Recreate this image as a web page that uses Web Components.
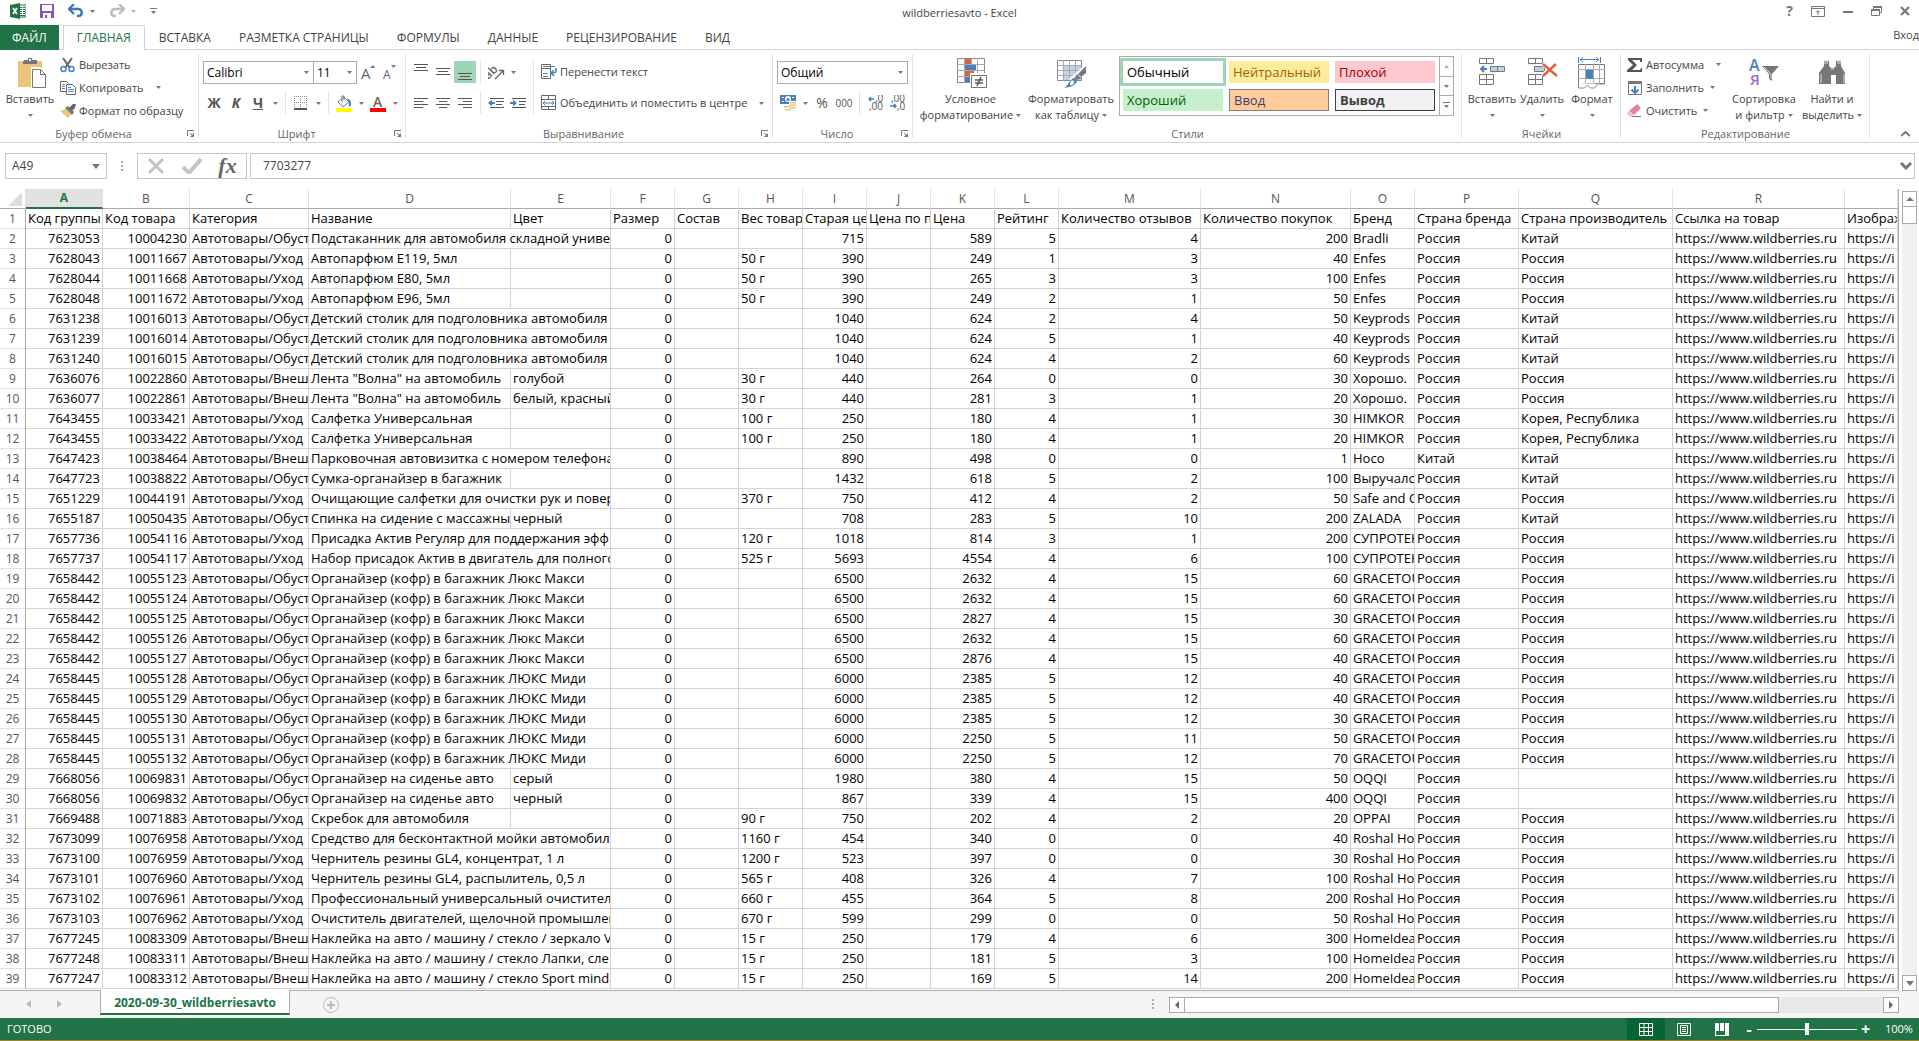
<!DOCTYPE html>
<html lang="ru">
<head>
<meta charset="utf-8">
<title>wildberriesavto - Excel</title>
<style>
html, body { margin: 0; height: 100%; overflow: hidden; background: #fff; }
body {
  --green: #217346; --line: #d4d4d4; --edge: #ababab; --ink: #444; --soft: #666;
  font-family: "Open Sans", "Noto Sans", sans-serif; font-size: 12px; line-height: 16px; color: var(--ink);
}
</style>
</head>
<body>
<xl-app></xl-app>
<script>
const ICONS = {
  down: [5, 3, '<path d="M0 0h5L2.5 3z" fill="#777"/>'],
  downpale: [5, 3, '<path d="M0 0h5L2.5 3z" fill="#b5b5b5"/>'],
  downbig: [8, 5, '<path d="M0 0h8L4 5z" fill="#777"/>'],
  up: [8, 4, '<path d="M0 4h8L4 0z" fill="#777"/>'],
  uppale: [5, 3, '<path d="M0 3h5L2.5 0z" fill="#ababab"/>'],
  left: [4, 8, '<path d="M4 0v8L0 4z" fill="#666"/>'],
  right: [4, 8, '<path d="M0 0v8l4-4z" fill="#666"/>'],
  leftpale: [5, 8, '<path d="M5 0v8L0 4z" fill="#bbb"/>'],
  rightpale: [5, 8, '<path d="M0 0v8l5-4z" fill="#bbb"/>'],
  more: [7, 7, '<path d="M0 0h7v1H0z M1 3h5L3.500 6z" fill="#777"/>'],
  excel: [16, 16, '<path d="M9 2h7v12H9z" fill="#fff" stroke="#217346"/><path d="M10 4h2v1h-2zM13 4h2v1h-2zM10 6h2v1h-2zM13 6h2v1h-2zM10 8h2v1h-2zM13 8h2v1h-2zM10 10h2v1h-2zM13 10h2v1h-2zM10 12h5v1h-5z" fill="#217346"/><path d="M0 2l10-2v16L0 14z" fill="#217346"/><path d="M3 5l4 6M7 5l-4 6" stroke="#fff" stroke-width="1.800"/>'],
  save: [14, 14, '<path d="M0 0h14v14H0z" fill="#8a56ae"/><path d="M2 1h10v6H2zM3 9h8v5H3z" fill="#fff"/><path d="M5 11h2v3H5z" fill="#8a56ae"/>'],
  undo: [16, 14, '<path d="M2 5h8c5 0 5 7 0 7H9" fill="none" stroke="#3f78b5" stroke-width="2.400"/><path d="M6 0L1 5l5 5" fill="none" stroke="#3f78b5" stroke-width="2.400"/>'],
  redo: [16, 14, '<path d="M14 5H6c-5 0-5 7 0 7h1" fill="none" stroke="#bdbdbd" stroke-width="2.400"/><path d="M10 0l5 5-5 5" fill="none" stroke="#bdbdbd" stroke-width="2.400"/>'],
  ribbonopt: [14, 11, '<path d="M.5.5h13v10H.5zM0 2.500h14" fill="none" stroke="#777"/><path d="M7 9V5M5 6.500L7 4.500l2 2" fill="none" stroke="#777"/>'],
  min: [10, 10, '<path d="M0 5h10v2H0z" fill="#777"/>'],
  restore: [11, 10, '<path d="M2.500 3V.500h8v6H8M.5 3.500h8v6h-8z" fill="none" stroke="#777"/><path d="M2 0h9v2H2zM0 3h9v2H0z" fill="#777"/>'],
  close: [10, 10, '<path d="M1 1l8 8M9 1L1 9" stroke="#777" stroke-width="2.200"/>'],
  paste: [32, 32, '<path d="M4 4h24v26H4z" fill="#ecc57c"/><path d="M10 4V3h4V1h4v2h5v4H9V4z" fill="#777"/><path d="M15 2h2v2h-2z" fill="#fff"/><path d="M17 10h9l7 6v16H17z" fill="#fff"/><path d="M18.500 12.500h8l5 5v13h-13zM26.500 12.500v5h5" fill="#fff" stroke="#777"/>'],
  cut: [16, 16, '<path d="M3 1l7 10M12 1L5 11" stroke="#666" stroke-width="2"/><circle cx="3.500" cy="12" r="2.500" fill="none" stroke="#4a80bb" stroke-width="1.500"/><circle cx="11.500" cy="12" r="2.500" fill="none" stroke="#4a80bb" stroke-width="1.500"/>'],
  copy: [16, 16, '<path d="M.5 1.500h6l2 2v8h-8z" fill="#fff" stroke="#666"/><path d="M2 4.500h3M2 6.500h3M2 8.500h3" stroke="#4a80bb"/><path d="M6.500 4.500h6l3 3v7h-9z" fill="#fff" stroke="#666"/><path d="M8 7.500h3M8 9.500h6M8 11.500h6" stroke="#4a80bb"/>'],
  brush: [16, 16, '<path d="M0 8l6-2 5 5-3 4z" fill="#ecc57c"/><path d="M5 5l3-2 6 6-2 3z" fill="#777"/><path d="M9 5l4-4 3 0-1 4-3 3z" fill="#666"/>'],
  grow: [14, 16, '<path d="M9 4l3-3 2 3z" fill="#4a80bb"/><text x="0" y="15" font-size="15" fill="#666" font-family="Open Sans">A</text>'],
  shrink: [14, 16, '<path d="M8 1h5l-2.500 3z" fill="#4a80bb"/><text x="0" y="15" font-size="12" fill="#666" font-family="Open Sans">A</text>'],
  borders: [14, 14, '<path d="M.5 0v12M6.500 0v12M12.500 0v12M0 .5h13M0 6.500h13" stroke="#888" stroke-dasharray="1 1"/><path d="M0 12h13v2H0z" fill="#555"/>'],
  fill: [16, 17, '<path d="M2 7l6-5 5 5-6 5z" fill="#fff" stroke="#777"/><path d="M6 7V1h2v4" fill="none" stroke="#777"/><path d="M11 4c4 0 4 3 4 6 0 2-3 2-2-1z" fill="#4a80bb"/><path d="M0 13h16v4H0z" fill="#ff0"/>'],
  fontcolor: [16, 17, '<text x="3" y="12" font-size="14" font-weight="600" fill="#666" font-family="Open Sans">A</text><path d="M0 13h16v4H0z" fill="#f00"/>'],
  top: [14, 22, '<path d="M0 3.500h14M2 6.500h10M0 9.500h14" stroke="#555"/>'],
  mid: [14, 22, '<path d="M0 7.500h14M2 10.500h10M0 13.500h14" stroke="#555"/>'],
  bot: [14, 22, '<path d="M0 12.500h14M2 15.500h10M0 18.500h14" stroke="#555"/>'],
  al: [14, 11, '<path d="M0 .5h14M0 3.500h9M0 6.500h14M0 9.500h9" stroke="#555"/>'],
  ac: [14, 11, '<path d="M0 .5h14M3 3.500h8M0 6.500h14M3 9.500h8" stroke="#555"/>'],
  ar: [14, 11, '<path d="M0 .5h14M5 3.500h9M0 6.500h14M5 9.500h9" stroke="#555"/>'],
  orient: [17, 16, '<text x="-3" y="10" transform="rotate(-45 6 9)" font-size="12" font-weight="600" fill="#666" font-family="Open Sans">ab</text><path d="M7 15L15 7M11 6.500h4.500V11" fill="none" stroke="#666" stroke-width="1.300"/>'],
  outdent: [16, 11, '<path d="M2 .5h14M8 3.500h8M8 6.500h6M2 9.500h14" stroke="#555"/><path d="M0 5l4-3.500v2.500h3v2H4v2.500z" fill="#4a80bb"/>'],
  indent: [16, 11, '<path d="M2 .5h14M9 3.500h7M9 6.500h6M2 9.500h14" stroke="#555"/><path d="M7 5L3 1.500v2.500H0v2h3v2.500z" fill="#4a80bb"/>'],
  wrap: [16, 16, '<path d="M.5.5h9v4h-9zM.5 4.500h9v10h-9z" fill="#fff" stroke="#666"/><path d="M2 2.500h12M2 9.500h5M2 12.500h5" stroke="#4a80bb"/><path d="M15 4v3c0 2-2 2-4 2M13 6l-3 3 3 3" fill="none" stroke="#4a80bb" stroke-width="1.500"/>'],
  merge: [16, 16, '<path d="M.5.5h14v14H.5zM.5 4.500h14M.5 11.500h14M7.500.500v4M7.500 11.500v3" fill="none" stroke="#666"/><path d="M2 8h11M4 6L2 8l2 2M11 6l2 2-2 2" fill="none" stroke="#4a80bb"/>'],
  money: [16, 16, '<path d="M0 0h16v9H0z" fill="#4a80bb"/><path d="M2 2h2v1H2zM12 2h2v1h-2zM2 6h2v1H2zM5 4a3 3 0 0 1 6 0a3 3 0 0 1-6 0" fill="#fff"/><circle cx="8" cy="4.500" r="1.500" fill="#4a80bb"/><path d="M9 6h7v8H9zM4 10h7v6H4z" fill="#fff"/><path d="M10 7h6v1.500h-6zM9 9.500h7V11H9zM10 12h6v1.500h-6zM4 11h6v1.500H4zM5 14h6v1.500H5z" fill="#ecc57c"/>'],
  incdec: [15, 16, '<path d="M6 4H1M3 2L1 4l2 2" fill="none" stroke="#4a80bb" stroke-width="1.500"/><text x="7" y="7" font-size="10" fill="#555" font-family="Open Sans">,0</text><text x="1" y="15" font-size="10" fill="#555" font-family="Open Sans">,00</text>'],
  decdec: [15, 16, '<text x="1" y="7" font-size="10" fill="#555" font-family="Open Sans">,00</text><path d="M0 11h6M4 9l2 2-2 2" fill="none" stroke="#4a80bb" stroke-width="1.500"/><text x="7" y="15" font-size="10" fill="#555" font-family="Open Sans">,0</text>'],
  cond: [32, 32, '<path d="M2.500 1.500h27v24h-27z" fill="#fff" stroke="#888"/><path d="M2 7.500h28M2 13.500h28M2 19.500h28M9.500 1v25M22.500 1v25M16.500 1v25" stroke="#aaa"/><path d="M10 2h6v5h-6zM10 14h9v5h-9z" fill="#dc6141"/><path d="M10 8h11v5H10zM10 20h5v5h-5z" fill="#4a80bb"/><path d="M15 16h17v16H15z" fill="#fff"/><path d="M16.500 18.500h15v12h-15z" fill="#fff" stroke="#777"/><path d="M20 23h8M20 26h8M26 20l-4 9" stroke="#555" stroke-width="1.500"/>'],
  tablefmt: [32, 32, '<path d="M2.500 3.500h24v20h-24z" fill="#fff" stroke="#888"/><path d="M8 9h18v14H8z" fill="#c0d3e8"/><path d="M2 8.500h25M2 13.500h25M2 18.500h25M8.500 3v21M14.500 3v21M20.500 3v21" stroke="#aaa"/><path d="M32 6v9L18 27l-4-5z" fill="#fff"/><path d="M31 9v7l-5 4-3-3z" fill="#777"/><path d="M22 17l4 4-3 2-3-3z" fill="#777"/><path d="M17 22c4-3 7 0 4 4-3 4-7 4-12 5 4-2 4-6 8-9z" fill="#4a80bb"/><path d="M15 26c1-3 4-3 4-1s-2 4-4 3z" fill="#fff"/>'],
  insert: [32, 32, '<path d="M3.500 1.500h14v5h-14zM10.500 1.500v5M3.500 17.500h14v10h-14zM10.500 17.500v10M3.500 22.500h14" fill="#fff" stroke="#777"/><path d="M14.500 9.500h14v5h-14zM21.500 9.500v5" fill="#bcd2ea" stroke="#777"/><path d="M5 12h6M8 9l-3 3 3 3" fill="none" stroke="#4a80bb" stroke-width="2"/>'],
  remove: [32, 32, '<path d="M2.500 1.500h14v5h-14zM9.500 1.500v5M2.500 17.500h14v10h-14zM9.500 17.500v10M2.500 22.500h14" fill="#fff" stroke="#777"/><path d="M8.500 9.500h10v5h-10z" fill="#bcd2ea" stroke="#777"/><path d="M17 6l14 13M30 6L17 19" stroke="#fff" stroke-width="5"/><path d="M17 7l14 12M30 7L17 19" stroke="#dc6141" stroke-width="2.400"/>'],
  format: [32, 32, '<path d="M2.500 0v6M24.500 0v6M4 2.500h19M7 0L4 2.500 7 5M20 0l3 2.500L20 5" fill="none" stroke="#4a80bb"/><path d="M2.500 7.500h26v19h-26z" fill="#fff" stroke="#777"/><path d="M2 12.500h27M2 21.500h27M9.500 7v20M17.500 7v20M23.500 7v20" stroke="#aaa"/><path d="M10 13h7v9h-7z" fill="#4a80bb"/><path d="M2.500 26v5h6l3-3 3 3h4l3-4h7" fill="#fff" stroke="#888"/>'],
  sum: [16, 16, '<path d="M1 1h14v4h-2V3H5l5 5-5 5h8l1-2h1v4H0v-2l6-5-5-5z" fill="#555"/>'],
  filldown: [16, 16, '<path d="M1.500 1.500h13v13h-13z" fill="#fff" stroke="#777"/><path d="M1 1h14v3H1z" fill="#777"/><path d="M8 6v7M4.500 9.500L8 13l3.500-3.500" fill="none" stroke="#4a80bb" stroke-width="2"/>'],
  erase: [16, 16, '<path d="M10 1l4 4-7 7-5-4z" fill="#e8819b"/><path d="M2 8l4 4-2 2-3-2-1-2z" fill="#ecc0cc"/><path d="M5 13.500h9" stroke="#777"/>'],
  sort: [32, 32, '<text x="1" y="14" font-size="16" font-weight="600" fill="#4a80bb" font-family="Open Sans">А</text><text x="2" y="28" font-size="15" font-weight="600" fill="#9a6bc0" font-family="Open Sans">Я</text><path d="M14 9h17l-7 8v7l-3-2v-5z" fill="#777"/><path d="M16 10l7 7v5" stroke="#ddd" fill="none"/>'],
  find: [32, 32, '<path d="M8 4h5v5l2 2h3l2-2V4h5v5l4 7v11h-9v-9h-5v9H3V16l5-7z" fill="#777"/><path d="M9 3v4M11 3v4M22 3v4M24 3v4M5 17v9M28 17v9M15 12h3" stroke="#ddd"/>'],
  launch: [8, 8, '<path d="M.5 6V.5H7M3 3l2 2" fill="none" stroke="#777"/><path d="M7 3v4H3z" fill="#777"/>'],
  collapse: [9, 6, '<path d="M0 5l4.500-4L9 5" fill="none" stroke="#777" stroke-width="2"/>'],
  expand: [12, 8, '<path d="M1 1l5 5 5-5" fill="none" stroke="#777" stroke-width="3"/>'],
  cancel: [18, 16, '<path d="M2 1l14 14M16 1L2 15" stroke="#c4c4c4" stroke-width="3"/>'],
  ok: [20, 16, '<path d="M1 9l6 6L19 1" fill="none" stroke="#c4c4c4" stroke-width="4"/>'],
  dots: [2, 10, '<path d="M0 0h2v2H0zM0 4h2v2H0zM0 8h2v2H0z" fill="#ababab"/>'],
  corner: [14, 14, '<path d="M14 0v14H0z" fill="#dcdcdc"/>'],
  plus: [18, 18, '<circle cx="9" cy="9" r="7.500" fill="none" stroke="#bbb"/><path d="M9 5v8M5 9h8" stroke="#bbb" stroke-width="2"/>'],
  vnormal: [14, 13, '<path d="M.5.5h13v12H.500zM0 4.500h14M0 8.500h14M5 0v13M9.500 0v13" fill="none" stroke="#fff"/>'],
  vpage: [14, 13, '<path d="M.5.5h13v12H.500zM3.500 2.500h7v8h-7zM5 4.500h4M5 6.500h4M5 8.500h4" fill="none" stroke="#fff"/>'],
  vbreak: [14, 13, '<path d="M0 0h4v8H0zM5 0h4v8H5zM10 0h4v13h-4z" fill="#fff"/><path d="M.5 8v4.500H10" fill="none" stroke="#fff"/>'],
};

/* Registers an element whose shadow root is cloned from a template. */
function define(name, css, html) {
  const tpl = document.createElement('template');
  const base = ':host{display:block;box-sizing:border-box}*{box-sizing:border-box}' +
    'button,input,select{font:inherit;color:inherit;background:none;border:0;margin:0;padding:0;outline:0;min-width:0}';
  customElements.define(name, class extends HTMLElement {
    constructor() { super(); this.attachShadow({ mode: 'open' }); }
    connectedCallback() {
      if (this.shadowRoot.childNodes.length) return;
      tpl.innerHTML = '<style>' + base + css + '</style>' + (typeof html === 'function' ? html(this) : html);
      this.shadowRoot.append(tpl.content.cloneNode(true));
    }
  });
}
const ic = n => `<xl-icon name="${n}"></xl-icon>`;

define('xl-icon', ':host{display:inline-block;flex:none;line-height:0}svg{display:block}', el => {
  const [w, h, body] = ICONS[el.getAttribute('name')];
  return `<svg width="${w}" height="${h}" viewBox="0 0 ${w} ${h}" aria-hidden="true">${body}</svg>`;
});

/* 22px square tool button; "arrow" makes the narrow drop-down half. */
define('xl-tool', `
  :host{flex:none;width:22px;height:22px}
  :host([arrow]){width:12px}
  :host([on]) button{background:#9fd5b7}
  button{width:100%;height:100%;display:flex;align-items:center;justify-content:center;font-size:14px;line-height:16px;color:#555}`,
  el => `<button aria-label="${el.getAttribute('label') || 'Меню'}">${el.hasAttribute('arrow') ? ic('down') : el.hasAttribute('icon') ? ic(el.getAttribute('icon')) : ''}<slot></slot></button>`);

define('xl-sep', ':host{flex:none;width:9px;display:flex;justify-content:center;align-self:stretch}i{width:1px;background:#e1e1e1}', '<i></i>');

define('xl-small', `
  :host{flex:none;height:23px}
  :host([fit]){height:22px}
  button{height:100%;display:flex;align-items:center;gap:3px;padding:0 3px;white-space:nowrap}
  .pic{width:16px;display:flex;justify-content:center}
  .arrow{margin-left:3px;display:flex}
  :host([far]) .arrow{margin-left:9px}`,
  el => `<button><span class="pic">${ic(el.getAttribute('icon'))}</span><slot></slot>${el.hasAttribute('menu') ? '<span class="arrow">' + ic('down') + '</span>' : ''}</button>`);

define('xl-big', `
  :host{flex:none;width:50px}
  button{width:100%;display:flex;flex-direction:column;align-items:center;padding:4px 0 0;text-align:center;white-space:nowrap}
  .l{height:16px;display:flex;align-items:center;gap:3px;margin:0 -8px}
  xl-icon{margin-bottom:2px}.l xl-icon{margin:0}`,
  el => `<button>${ic(el.getAttribute('icon'))}<span class="l"><slot></slot></span><span class="l">${el.getAttribute('second') || ''}${ic('down')}</span></button>`);

define('xl-combo', `
  :host{display:grid;grid-template-columns:1fr;height:23px;border:1px solid var(--edge);background:#fff;color:#000;font-size:12px}
  select{grid-area:1/1;width:100%;padding:0 3px;appearance:none}
  xl-icon{grid-area:1/1;justify-self:end;align-self:center;margin-right:4px;pointer-events:none}`,
  el => `<select aria-label="${el.getAttribute('label')}"><option>${el.getAttribute('value')}</option></select>${ic('down')}`);

define('xl-group', `
  :host{flex:none;display:flex;flex-direction:column;margin-top:3px;height:89px;background:linear-gradient(#e1e1e1,#e1e1e1) right 1px/1px 84px no-repeat}
  .body{flex:1;display:flex;padding-left:var(--pad,3px)}
  .foot{height:16px;display:flex;align-items:center;text-align:center;color:var(--soft)}
  .foot span{flex:1}
  .foot button{width:12px;display:flex}`,
  el => `<div class="body"><slot></slot></div><div class="foot"><span>${el.getAttribute('label')}</span>${el.hasAttribute('launch') ? `<button aria-label="Параметры: ${el.getAttribute('label')}">${ic('launch')}</button>` : ''}</div>`);

define('xl-gallery', `
  :host{flex:none;width:335px;height:60px;margin:3px 0 0 5px;border:1px solid var(--edge);display:flex}
  .set{flex:1;display:grid;grid-template-columns:repeat(3,100px);grid-template-rows:22px 22px;gap:6px;padding:4px 3px;font-size:13px}
  .set button{text-align:left;padding:0 4px;line-height:20px}
  .normal{color:#000;outline:3px solid #9fd5b7}
  .neutral{background:#ffeb9c;color:#9c6500}.bad{background:#ffc7ce;color:#9c0006}.good{background:#c6efce;color:#006100}
  .set .in{background:#ffcc99;border:1px solid #7f7f7f;color:#3f3f76}
  .set .out{background:#f2f2f2;border:1px solid #3f3f3f;color:#3f3f3f;font-weight:700}
  .bar{width:14px;display:flex;flex-direction:column;border-left:1px solid var(--edge)}
  .bar button{flex:1;display:flex;align-items:center;justify-content:center}
  .bar button+button{border-top:1px solid var(--edge)}`,
  `<div class="set"><button class="normal">Обычный</button><button class="neutral">Нейтральный</button><button class="bad">Плохой</button>
   <button class="good">Хороший</button><button class="in">Ввод</button><button class="out">Вывод</button></div>
   <div class="bar"><button aria-label="Вверх">${ic('uppale')}</button><button aria-label="Вниз">${ic('down')}</button><button aria-label="Все стили">${ic('more')}</button></div>`);

define('xl-titlebar', `
  :host{height:25px;display:grid;grid-template-columns:1fr auto 1fr;align-items:start}
  .q,.w{display:flex;align-items:center;height:22px}
  .q{padding-left:10px}
  .q button,.w button{display:flex}
  .q .save{margin-left:14px}.q .gap{margin-left:14px}.q .arr{margin-left:6px}
  h1{margin:0;padding-top:5px;font-size:11px;line-height:16px;font-weight:400}
  .w{justify-content:flex-end;gap:18px;padding-right:9px}
  .w .help{font-weight:700;font-size:14px;color:#777}`,
  `<div class="q">${ic('excel')}<button class="save" aria-label="Сохранить">${ic('save')}</button>
   <button class="gap" aria-label="Отменить">${ic('undo')}</button><button class="arr" aria-label="Список отмены">${ic('down')}</button>
   <button class="gap" aria-label="Вернуть">${ic('redo')}</button><button class="arr" aria-label="Список возврата">${ic('downpale')}</button>
   <button class="gap" aria-label="Настройка панели">${ic('more')}</button></div>
   <h1>wildberriesavto - Excel</h1>
   <div class="w"><button class="help" aria-label="Справка">?</button><button aria-label="Лента">${ic('ribbonopt')}</button><button aria-label="Свернуть">${ic('min')}</button><button aria-label="Восстановить">${ic('restore')}</button><button aria-label="Закрыть">${ic('close')}</button></div>`);

define('xl-tabs', `
  :host{height:25px;display:flex;box-shadow:inset 0 -1px var(--line)}
  button{height:25px;padding:0 14px;white-space:nowrap}
  .file{background:var(--green);color:#fff;padding:0 12px;margin-right:4px}
  .on{background:#fff;color:var(--green);border:1px solid var(--line);border-bottom:0;padding:0 13px}
  .login{margin-left:auto;padding:0;height:20px;font-size:11px}`,
  `<button class="file">ФАЙЛ</button><button class="on">ГЛАВНАЯ</button><button>ВСТАВКА</button><button>РАЗМЕТКА СТРАНИЦЫ</button><button>ФОРМУЛЫ</button><button>ДАННЫЕ</button><button>РЕЦЕНЗИРОВАНИЕ</button><button>ВИД</button><button class="login">Вход</button>`);

define('xl-ribbon', `
  :host{height:93px;display:flex;border-bottom:1px solid var(--line);font-size:11px}
  .three,.two{display:flex;flex-direction:column}
  .two{padding-top:8px;gap:9px;flex:none}
  .two>.tall{height:53px}
  .row{display:flex;height:22px}
  .end{flex:1;display:flex;align-items:flex-end;justify-content:flex-end;padding:0 9px 5px}
  .end button{display:flex}
  .clip{width:199px}.font{width:207px;--pad:4px}.align{width:367px;--pad:4px}.num{width:140px;--pad:4px}
  .styles{width:549px;--pad:0}.cells{width:159px;--pad:5px}.edit{width:249px}
  .paste{width:54px}.cond{width:115px}.tab{width:86px}.wide{width:68px}.edit .three{width:106px}
  .b{font-weight:700}.i{font-weight:700;font-style:italic}.u{font-weight:700;text-decoration:underline}.s{font-size:10px}
  .f1{width:111px}.f2{width:43px;border-left:0}.f3{width:131px}
  .fontrow{height:23px;margin-bottom:-1px}`,
  `<xl-group class="clip" label="Буфер обмена" launch><xl-big class="paste" icon="paste">Вставить</xl-big>
     <div class="three"><xl-small icon="cut">Вырезать</xl-small><xl-small icon="copy" menu far>Копировать</xl-small><xl-small icon="brush">Формат по образцу</xl-small></div></xl-group>
   <xl-group class="font" label="Шрифт" launch><div class="two">
     <div class="row fontrow"><xl-combo class="f1" label="Шрифт" value="Calibri"></xl-combo><xl-combo class="f2" label="Размер" value="11"></xl-combo><xl-tool icon="grow" label="Увеличить размер"></xl-tool><xl-tool icon="shrink" label="Уменьшить размер"></xl-tool></div>
     <div class="row"><xl-tool label="Полужирный"><span class="b">Ж</span></xl-tool><xl-tool label="Курсив"><span class="i">К</span></xl-tool><xl-tool label="Подчеркнутый"><span class="u">Ч</span></xl-tool><xl-tool arrow></xl-tool><xl-sep></xl-sep><xl-tool icon="borders" label="Границы"></xl-tool><xl-tool arrow></xl-tool><xl-sep></xl-sep><xl-tool icon="fill" label="Заливка"></xl-tool><xl-tool arrow></xl-tool><xl-tool icon="fontcolor" label="Цвет текста"></xl-tool><xl-tool arrow></xl-tool></div></div></xl-group>
   <xl-group class="align" label="Выравнивание" launch><div class="two">
     <div class="row"><xl-tool icon="top" label="По верхнему краю"></xl-tool><xl-tool icon="mid" label="По середине"></xl-tool><xl-tool icon="bot" on label="По нижнему краю"></xl-tool><xl-sep></xl-sep><xl-tool icon="orient" label="Ориентация"></xl-tool><xl-tool arrow></xl-tool></div>
     <div class="row"><xl-tool icon="al" label="По левому краю"></xl-tool><xl-tool icon="ac" label="По центру"></xl-tool><xl-tool icon="ar" label="По правому краю"></xl-tool><xl-sep></xl-sep><xl-tool icon="outdent" label="Уменьшить отступ"></xl-tool><xl-tool icon="indent" label="Увеличить отступ"></xl-tool></div></div>
     <div class="two"><xl-sep class="tall"></xl-sep></div>
     <div class="two"><div class="row"><xl-small fit icon="wrap">Перенести текст</xl-small></div><div class="row"><xl-small fit icon="merge" menu far>Объединить и поместить в центре</xl-small></div></div></xl-group>
   <xl-group class="num" label="Число" launch><div class="two">
     <div class="row fontrow"><xl-combo class="f3" label="Числовой формат" value="Общий"></xl-combo></div>
     <div class="row"><xl-tool icon="money" label="Финансовый формат"></xl-tool><xl-tool arrow></xl-tool><xl-tool label="Процентный формат">%</xl-tool><xl-tool label="Формат с разделителями"><span class="s">000</span></xl-tool><xl-sep></xl-sep><xl-tool icon="incdec" label="Увеличить разрядность"></xl-tool><xl-tool icon="decdec" label="Уменьшить разрядность"></xl-tool></div></div></xl-group>
   <xl-group class="styles" label="Стили"><xl-big class="cond" icon="cond" second="форматирование">Условное</xl-big><xl-big class="tab" icon="tablefmt" second="как таблицу">Форматировать</xl-big><xl-gallery></xl-gallery></xl-group>
   <xl-group class="cells" label="Ячейки"><xl-big icon="insert">Вставить</xl-big><xl-big icon="remove">Удалить</xl-big><xl-big icon="format">Формат</xl-big></xl-group>
   <xl-group class="edit" label="Редактирование"><div class="three"><xl-small icon="sum" menu far>Автосумма</xl-small><xl-small icon="filldown" menu>Заполнить</xl-small><xl-small icon="erase" menu>Очистить</xl-small></div>
     <xl-big class="wide" icon="sort" second="и фильтр">Сортировка</xl-big><xl-big class="wide" icon="find" second="выделить">Найти и</xl-big></xl-group>
   <div class="end"><button aria-label="Свернуть ленту">${ic('collapse')}</button></div>`);

define('xl-formula', `
  :host{display:flex;padding:10px 4px 10px 5px;font-size:12px}
  .box{height:26px;border:1px solid #c6c6c6;display:flex;align-items:center}
  .name{width:102px;padding:0 6px}
  .name input{flex:1;width:60px}
  .dots{width:30px;display:flex;align-items:center;justify-content:center}
  .btns{width:110px;justify-content:space-around;padding:0 1px}
  .btns button{display:flex;justify-content:center}
  .btns .fx{font:italic 700 22px/22px "Liberation Serif",serif;color:#666}
  .val{flex:1;margin-left:3px;padding:0 2px 0 12px}
  .val input{flex:1}
  .val button{display:flex}`,
  `<div class="box name"><input aria-label="Имя ячейки" value="A49">${ic('downbig')}</div><div class="dots">${ic('dots')}</div>
   <div class="box btns"><button aria-label="Отмена">${ic('cancel')}</button><button aria-label="Ввод">${ic('ok')}</button><button class="fx" aria-label="Вставить функцию">fx</button></div>
   <div class="box val"><input aria-label="Строка формул" value="7703277"><button aria-label="Развернуть">${ic('expand')}</button></div>`);

const COLS = [['A',77],['B',87],['C',119],['D',202],['E',100],['F',64],['G',64],['H',64],['I',64],['J',64],['K',64],['L',64],['M',142],['N',150],['O',64],['P',104],['Q',154],['R',172],['','']];
const HEAD = ['Код группы','Код товара','Категория','Название','Цвет','Размер','Состав','Вес товар','Старая це','Цена по п','Цена','Рейтинг','Количество отзывов','Количество покупок','Бренд','Страна бренда','Страна производитель','Ссылка на товар','Изображ'];
const KIND = { О: 'Обуст', У: 'Уход', В: 'Внеш' };
/* group|item|category|name|colour|weight|old price|price|rating|reviews|orders|brand|brand country|maker country; ">" lets the name run into the next cell */
const DATA = `7623053|10004230|О|>Подстаканник для автомобиля складной униве|||715|589|5|4|200|Bradli|Россия|Китай
7628043|10011667|У|Автопарфюм Е119, 5мл||50 г|390|249|1|3|40|Enfes|Россия|Россия
7628044|10011668|У|Автопарфюм Е80, 5мл||50 г|390|265|3|3|100|Enfes|Россия|Россия
7628048|10011672|У|Автопарфюм Е96, 5мл||50 г|390|249|2|1|50|Enfes|Россия|Россия
7631238|10016013|О|>Детский столик для подголовника автомобиля|||1040|624|2|4|50|Keyprods|Россия|Китай
7631239|10016014|О|>Детский столик для подголовника автомобиля|||1040|624|5|1|40|Keyprods|Россия|Китай
7631240|10016015|О|>Детский столик для подголовника автомобиля|||1040|624|4|2|60|Keyprods|Россия|Китай
7636076|10022860|В|Лента "Волна" на автомобиль|голубой|30 г|440|264|0|0|30|Хорошо.|Россия|Россия
7636077|10022861|В|Лента "Волна" на автомобиль|белый, красный|30 г|440|281|3|1|20|Хорошо.|Россия|Россия
7643455|10033421|У|Салфетка Универсальная||100 г|250|180|4|1|30|HIMKOR|Россия|Корея, Республика
7643455|10033422|У|Салфетка Универсальная||100 г|250|180|4|1|20|HIMKOR|Россия|Корея, Республика
7647423|10038464|В|>Парковочная автовизитка с номером телефона|||890|498|0|0|1|Hoco|Китай|Китай
7647723|10038822|О|Сумка-органайзер в багажник|||1432|618|5|2|100|Выручалс|Россия|Китай
7651229|10044191|У|>Очищающие салфетки для очистки рук и повер||370 г|750|412|4|2|50|Safe and C|Россия|Россия
7655187|10050435|О|Спинка на сидение с массажны|черный||708|283|5|10|200|ZALADA|Россия|Китай
7657736|10054116|У|>Присадка Актив Регуляр для поддержания эфф||120 г|1018|814|3|1|200|СУПРОТЕК|Россия|Россия
7657737|10054117|У|>Набор присадок Актив в двигатель для полного||525 г|5693|4554|4|6|100|СУПРОТЕК|Россия|Россия
7658442|10055123|О|>Органайзер (кофр) в багажник Люкс Макси|||6500|2632|4|15|60|GRACETOU|Россия|Россия
7658442|10055124|О|>Органайзер (кофр) в багажник Люкс Макси|||6500|2632|4|15|60|GRACETOU|Россия|Россия
7658442|10055125|О|>Органайзер (кофр) в багажник Люкс Макси|||6500|2827|4|15|30|GRACETOU|Россия|Россия
7658442|10055126|О|>Органайзер (кофр) в багажник Люкс Макси|||6500|2632|4|15|60|GRACETOU|Россия|Россия
7658442|10055127|О|>Органайзер (кофр) в багажник Люкс Макси|||6500|2876|4|15|40|GRACETOU|Россия|Россия
7658445|10055128|О|>Органайзер (кофр) в багажник ЛЮКС Миди|||6000|2385|5|12|40|GRACETOU|Россия|Россия
7658445|10055129|О|>Органайзер (кофр) в багажник ЛЮКС Миди|||6000|2385|5|12|40|GRACETOU|Россия|Россия
7658445|10055130|О|>Органайзер (кофр) в багажник ЛЮКС Миди|||6000|2385|5|12|30|GRACETOU|Россия|Россия
7658445|10055131|О|>Органайзер (кофр) в багажник ЛЮКС Миди|||6000|2250|5|11|50|GRACETOU|Россия|Россия
7658445|10055132|О|>Органайзер (кофр) в багажник ЛЮКС Миди|||6000|2250|5|12|70|GRACETOU|Россия|Россия
7668056|10069831|О|Органайзер на сиденье авто|серый||1980|380|4|15|50|OQQI|Россия|
7668056|10069832|О|Органайзер на сиденье авто|черный||867|339|4|15|400|OQQI|Россия|
7669488|10071883|У|Скребок для автомобиля||90 г|750|202|4|2|20|OPPAI|Россия|Россия
7673099|10076958|У|>Средство для бесконтактной мойки автомобил||1160 г|454|340|0|0|40|Roshal Ho|Россия|Россия
7673100|10076959|У|>Чернитель резины GL4, концентрат, 1 л||1200 г|523|397|0|0|30|Roshal Ho|Россия|Россия
7673101|10076960|У|>Чернитель резины GL4, распылитель, 0,5 л||565 г|408|326|4|7|100|Roshal Ho|Россия|Россия
7673102|10076961|У|>Профессиональный универсальный очиститель||660 г|455|364|5|8|200|Roshal Ho|Россия|Россия
7673103|10076962|У|>Очиститель двигателей, щелочной промышлен||670 г|599|299|0|0|50|Roshal Ho|Россия|Россия
7677245|10083309|В|>Наклейка на авто / машину / стекло / зеркало V||15 г|250|179|4|6|300|HomeIdea|Россия|Россия
7677248|10083311|В|>Наклейка на авто / машину / стекло Лапки, сле||15 г|250|181|5|3|100|HomeIdea|Россия|Россия
7677247|10083312|В|>Наклейка на авто / машину / стекло Sport mind||15 г|250|169|5|14|200|HomeIdea|Россия|Россия`;

function gridHtml() {
  const cols = '<col style="width:26px">' + COLS.map(c => `<col${c[1] ? ` style="width:${c[1]}px"` : ''}>`).join('');
  const head = `<tr><th class="corner">${ic('corner')}</th>` + COLS.map((c, i) => `<th scope="col"${i ? '' : ' class="sel"'}>${c[0]}</th>`).join('') + '</tr>';
  const t = v => `<td>${v}</td>`, n = v => `<td class="n">${v}</td>`;
  const rows = DATA.split('\n').map((line, i) => {
    const [a, b, c, d, e, w, old, price, rate, rev, ord, brand, bc, mc] = line.split('|');
    const name = d[0] === '>' ? `<td colspan="2">${d.slice(1)}</td>` : t(d) + t(e);
    return `<tr><th scope="row">${i + 2}</th>` + n(a) + n(b) + t('Автотовары/' + KIND[c]) + name + n(0) + t('') + t(w) + n(old) + t('') +
      n(price) + n(rate) + n(rev) + n(ord) + t(brand) + t(bc) + t(mc) + t('https://www.wildberries.ru') + t('https://i') + '</tr>';
  }).join('');
  return `<table><colgroup>${cols}</colgroup><thead>${head}</thead><tbody><tr><th scope="row">1</th>${HEAD.map(t).join('')}</tr>${rows}</tbody></table>`;
}

define('xl-grid', `
  :host{flex:1;min-height:0;display:flex;color:#000}
  .view{flex:1;min-width:0;overflow:hidden;border-bottom:1px solid var(--edge);border-right:1px solid var(--edge)}
  table{width:100%;table-layout:fixed;border-collapse:separate;border-spacing:0}
  td,th{height:20px;padding:0 2px;border-right:1px solid var(--line);border-bottom:1px solid var(--line);line-height:19px;white-space:nowrap;overflow:hidden;font-weight:400;text-align:left}
  td{font-size:13px}
  .n{text-align:right}
  th{text-align:center;color:#555;padding:0}
  thead th{border-right-color:#e1e1e1;border-bottom-color:var(--edge);line-height:18px}
  tbody th{border-right-color:var(--edge);border-bottom-color:#e1e1e1}
  thead .sel{background:#e1e1e1;color:var(--green);font-weight:700;border-bottom:2px solid var(--green)}
  thead .corner{padding:0 0 0 8px;line-height:0}
  .corner xl-icon{display:block}
  .scroll{width:20px;padding:2px 2px 0 3px;display:flex;flex-direction:column}
  .scroll button{height:16px;border:1px solid var(--edge);background:#fff;display:flex;align-items:center;justify-content:center}
  .thumb{height:17px;border:1px solid var(--edge);border-top:0;background:#fff}
  .track{flex:1;background:#f0f0f0}`,
  `<div class="view">${gridHtml()}</div><div class="scroll"><button aria-label="Вверх">${ic('up')}</button><div class="thumb"></div><div class="track"></div><button aria-label="Вниз">${ic('downbig')}</button></div>`);

define('xl-sheets', `
  :host{height:27px;display:flex;background:#f5f5f5}
  .nav{width:100px;display:flex;align-items:center;padding:0 0 2px 26px;gap:26px}
  .nav button,.add{display:flex}
  .tab{width:190px;height:25px;margin-top:-1px;padding-top:2px;background:#fff;color:var(--green);font-weight:700;border:1px solid var(--edge);border-top:0;border-bottom:2px solid var(--green)}
  .add{align-self:center;margin-left:32px}
  .h{margin-left:auto;width:767px;display:flex;align-items:center;padding:0 20px 0 0}
  .dots{width:17px;flex:none}
  .h button{width:16px;height:16px;flex:none;border:1px solid var(--edge);background:#fff;display:flex;align-items:center;justify-content:center}
  .thumb{flex:595;height:16px;border:1px solid var(--edge);border-left:0;background:#fff}
  .track{flex:104;height:16px;background:#e9e9e9}`,
  `<div class="nav"><button aria-label="Предыдущий лист">${ic('leftpale')}</button><button aria-label="Следующий лист">${ic('rightpale')}</button></div>
   <button class="tab">2020-09-30_wildberriesavto</button><button class="add" aria-label="Новый лист">${ic('plus')}</button>
   <div class="h"><span class="dots">${ic('dots')}</span><button aria-label="Влево">${ic('left')}</button><div class="thumb"></div><div class="track"></div><button aria-label="Вправо">${ic('right')}</button></div>`);

define('xl-status', `
  :host{height:23px;display:flex;align-items:center;background:var(--green);color:#fff;border-bottom:1px solid #a0842c;padding:0 7px}
  .ready{flex:1;font-size:11px}
  .v{width:38px;height:22px;display:flex;align-items:center;justify-content:center}
  .on{background:#0a6332}
  .zoom{display:flex;align-items:center;gap:4px;margin-left:4px}
  .z{width:8px;font-size:16px;font-weight:700;line-height:16px}
  input{width:100px;height:12px;appearance:none}
  input::-webkit-slider-runnable-track{height:12px;background:linear-gradient(#fff,#fff) center/100% 1px no-repeat}
  input::-webkit-slider-thumb{appearance:none;width:4px;height:12px;background:#fff}
  .pct{width:27px;margin-left:16px;font-size:11px;white-space:nowrap}`,
  `<span class="ready">ГОТОВО</span><button class="v on" aria-label="Обычный">${ic('vnormal')}</button><button class="v" aria-label="Разметка страницы">${ic('vpage')}</button><button class="v" aria-label="Страничный">${ic('vbreak')}</button>
   <div class="zoom"><button class="z" aria-label="Уменьшить">-</button><input type="range" min="0" max="100" value="50" aria-label="Масштаб"><button class="z" aria-label="Увеличить">+</button></div><span class="pct">100%</span>`);

define('xl-app', ':host{height:100vh;display:flex;flex-direction:column;overflow:hidden}',
  '<xl-titlebar></xl-titlebar><xl-tabs></xl-tabs><xl-ribbon></xl-ribbon><xl-formula></xl-formula><xl-grid></xl-grid><xl-sheets></xl-sheets><xl-status></xl-status>');
</script>
</body>
</html>
